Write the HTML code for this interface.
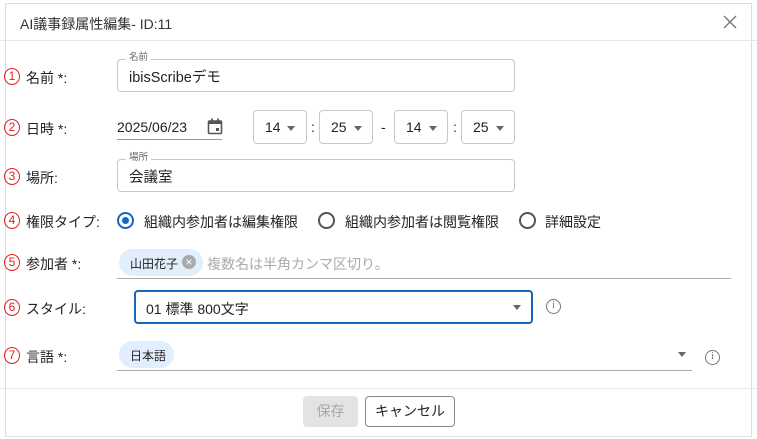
<!DOCTYPE html>
<html><head><meta charset="utf-8"><style>
*{box-sizing:border-box;margin:0;padding:0}
body{width:757px;height:439px;background:#fff;font-family:"Liberation Sans","Noto Sans CJK JP",sans-serif;color:#222;position:relative;overflow:hidden;font-size:14px}
.dlg{position:absolute;left:5px;top:3px;width:747px;height:434px;border:1px solid #ddd;background:#fff}
.a{position:absolute;white-space:nowrap}
.num{position:absolute;width:16px;height:17px;border:1.2px solid #e02020;border-radius:50%;color:#e02020;font-size:12px;line-height:15px;text-align:center}
.lbl{font-size:14px;color:#222}
.box{position:absolute;border:1px solid #c8c8c8;border-radius:4px;background:#fff}
.leg{position:absolute;font-size:9.5px;color:#666;background:#fff;padding:0 3px;line-height:10px}
.tri{position:absolute;width:0;height:0;border-left:4.5px solid transparent;border-right:4.5px solid transparent;border-top:5px solid #666}
.radio{position:absolute;width:17px;height:17px;border:2px solid #555;border-radius:50%}
.chip{position:absolute;background:#e1eefb;border-radius:14px;font-size:12px;color:#222}
.info{position:absolute;width:15px;height:15px;border:1.3px solid #777;border-radius:50%;color:#777;font-size:10px;text-align:center;line-height:12px;font-family:"Liberation Serif",serif}
</style></head><body>
<div class="dlg"></div>
<div class="a" style="left:0;top:40px;width:757px;border-top:1px solid #e6e6e6"></div>
<div class="a" style="left:0;top:388px;width:757px;border-top:1px solid #e6e6e6"></div>
<div class="a" style="left:20px;top:14px;font-size:14px;color:#333">AI議事録属性編集- ID:11</div>
<svg class="a" style="left:723px;top:15px" width="14" height="14"><path d="M1 1L13 13M13 1L1 13" stroke="#777" stroke-width="1.4"/></svg>

<!-- row1 -->
<div class="num" style="left:4px;top:68px">1</div>
<div class="a lbl" style="left:26px;top:68px">名前 *:</div>
<div class="box" style="left:117px;top:59px;width:398px;height:33px"></div>
<div class="leg" style="left:126px;top:53px">名前</div>
<div class="a" style="left:129px;top:66px;font-size:14.5px">ibisScribeデモ</div>

<!-- row2 -->
<div class="num" style="left:4px;top:119px">2</div>
<div class="a lbl" style="left:26px;top:119px">日時 *:</div>
<div class="a" style="left:117px;top:119px;font-size:14px">2025/06/23</div>
<div class="a" style="left:117px;top:139px;width:105px;border-top:1px solid #999"></div>
<svg class="a" style="left:207px;top:118px" width="16" height="17" viewBox="0 0 16 17"><rect x="1.5" y="3" width="13" height="12.5" rx="1" fill="none" stroke="#555" stroke-width="1.6"/><rect x="1.5" y="3" width="13" height="3" fill="#555"/><rect x="4" y="0.5" width="1.8" height="3" fill="#555"/><rect x="10.2" y="0.5" width="1.8" height="3" fill="#555"/><rect x="9" y="10" width="3" height="3" fill="#555"/></svg>
<div class="box" style="left:253px;top:110px;width:54px;height:34px"></div>
<div class="a" style="left:265px;top:119px">14</div><div class="tri" style="left:287px;top:126px"></div>
<div class="a" style="left:311px;top:119px">:</div>
<div class="box" style="left:319px;top:110px;width:54px;height:34px"></div>
<div class="a" style="left:331px;top:119px">25</div><div class="tri" style="left:354px;top:126px"></div>
<div class="a" style="left:381px;top:119px">-</div>
<div class="box" style="left:394px;top:110px;width:54px;height:34px"></div>
<div class="a" style="left:406px;top:119px">14</div><div class="tri" style="left:429px;top:126px"></div>
<div class="a" style="left:453px;top:119px">:</div>
<div class="box" style="left:461px;top:110px;width:54px;height:34px"></div>
<div class="a" style="left:473px;top:119px">25</div><div class="tri" style="left:496px;top:126px"></div>

<!-- row3 -->
<div class="num" style="left:4px;top:168px">3</div>
<div class="a lbl" style="left:26px;top:168px">場所:</div>
<div class="box" style="left:117px;top:159px;width:398px;height:33px"></div>
<div class="leg" style="left:126px;top:153px">場所</div>
<div class="a" style="left:129px;top:166px;font-size:14.5px">会議室</div>

<!-- row4 -->
<div class="num" style="left:4px;top:212px">4</div>
<div class="a lbl" style="left:26px;top:212px">権限タイプ:</div>
<div class="radio" style="left:117px;top:212px;border-color:#1565c0"></div>
<div class="a" style="left:122px;top:217px;width:7px;height:7px;border-radius:50%;background:#1565c0"></div>
<div class="a" style="left:144px;top:212px">組織内参加者は編集権限</div>
<div class="radio" style="left:318px;top:212px"></div>
<div class="a" style="left:345px;top:212px">組織内参加者は閲覧権限</div>
<div class="radio" style="left:519px;top:212px"></div>
<div class="a" style="left:545px;top:212px">詳細設定</div>

<!-- row5 -->
<div class="num" style="left:4px;top:254px">5</div>
<div class="a lbl" style="left:26px;top:254px">参加者 *:</div>
<div class="chip" style="left:119px;top:249px;width:84px;height:27px"><span class="a" style="left:11px;top:6px">山田花子</span><span class="a" style="left:63px;top:6px;width:14px;height:14px;border-radius:50%;background:#aaa;color:#fff;font-size:12px;line-height:14px;text-align:center">×</span></div>
<div class="a" style="left:207px;top:254px;color:#aaa">複数名は半角カンマ区切り。</div>
<div class="a" style="left:117px;top:278px;width:614px;border-top:1px solid #aaa"></div>

<!-- row6 -->
<div class="num" style="left:4px;top:299px">6</div>
<div class="a lbl" style="left:26px;top:299px">スタイル:</div>
<div class="a" style="left:134px;top:290px;width:399px;height:34px;border:2px solid #1565c0;border-radius:4px"></div>
<div class="a" style="left:146px;top:299px">01 標準 800文字</div>
<div class="tri" style="left:513px;top:305px"></div>
<div class="info" style="left:546px;top:299px">i</div>

<!-- row7 -->
<div class="num" style="left:4px;top:347px">7</div>
<div class="a lbl" style="left:26px;top:347px">言語 *:</div>
<div class="chip" style="left:119px;top:341px;width:55px;height:27px"><span class="a" style="left:11px;top:6px">日本語</span></div>
<div class="a" style="left:117px;top:370px;width:575px;border-top:1px solid #aaa"></div>
<div class="tri" style="left:678px;top:352px"></div>
<div class="info" style="left:705px;top:350px">i</div>

<!-- footer -->
<div class="a" style="left:303px;top:396px;width:55px;height:31px;background:#e3e3e3;border-radius:4px;color:#a8a8a8;text-align:center;line-height:31px">保存</div>
<div class="a" style="left:365px;top:396px;width:90px;height:31px;border:1px solid #888;border-radius:4px;text-align:center;line-height:29px">キャンセル</div>
</body></html>
